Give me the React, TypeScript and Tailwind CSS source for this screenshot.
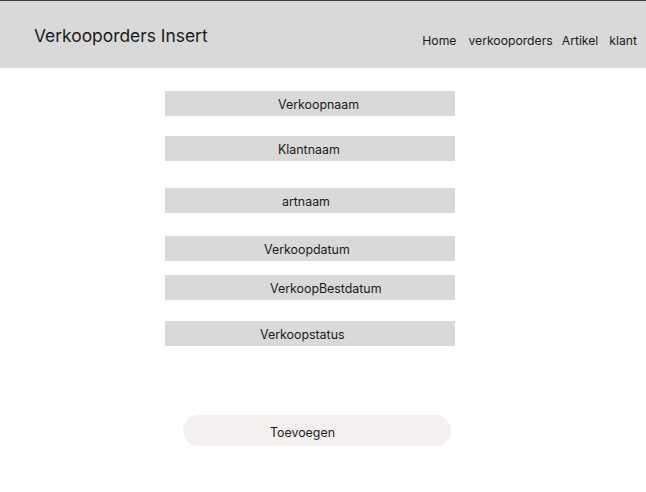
import React from "react";

type Field = {
  label: string;
  offset: string; // left padding so the label sits where the design had it
  gap: string;
};

const fields: Field[] = [
  { label: "Verkoopnaam", offset: "pl-[113px]", gap: "mt-[23px]" },
  { label: "Klantnaam", offset: "pl-[113px]", gap: "mt-[20px]" },
  { label: "artnaam", offset: "pl-[117px]", gap: "mt-[27px]" },
  { label: "Verkoopdatum", offset: "pl-[99px]", gap: "mt-[23px]" },
  { label: "VerkoopBestdatum", offset: "pl-[105px]", gap: "mt-[14px]" },
  { label: "Verkoopstatus", offset: "pl-[95px]", gap: "mt-[21px]" },
];

export default function App() {
  return (
    <div className="w-[646px] h-[492px] bg-white font-['Inter',sans-serif] text-[#1a1a1a] overflow-hidden">
      {/* Header */}
      <header className="h-[68px] bg-[#d9d9d9] border-t border-[#3a3a3a] flex items-start justify-between">
        <h1 className="ml-[34px] mt-[23px] text-[17.4px] leading-[24px] font-normal">
          Verkooporders Insert
        </h1>
        <nav className="mt-[32px] mr-[9px] flex gap-[9px] text-[12.2px] leading-[16px]">
          <a className="mr-[3px]">Home</a>
          <a>verkooporders</a>
          <a className="mr-[2px]">Artikel</a>
          <a>klant</a>
        </nav>
      </header>

      {/* Form */}
      <div className="flex flex-col ml-[165px]">
        {fields.map((f) => (
          <div
            key={f.label}
            className={`${f.gap} w-[290px] h-[25px] bg-[#d9d9d9] flex items-center pt-[3px] text-[12.4px] ${f.offset}`}
          >
            {f.label}
          </div>
        ))}
        <button className="mt-[69px] ml-[18px] w-[268px] h-[31px] rounded-full bg-[#f3f0ef] text-left pl-[87px] pt-[6px] text-[12.4px]">
          Toevoegen
        </button>
      </div>
    </div>
  );
}
